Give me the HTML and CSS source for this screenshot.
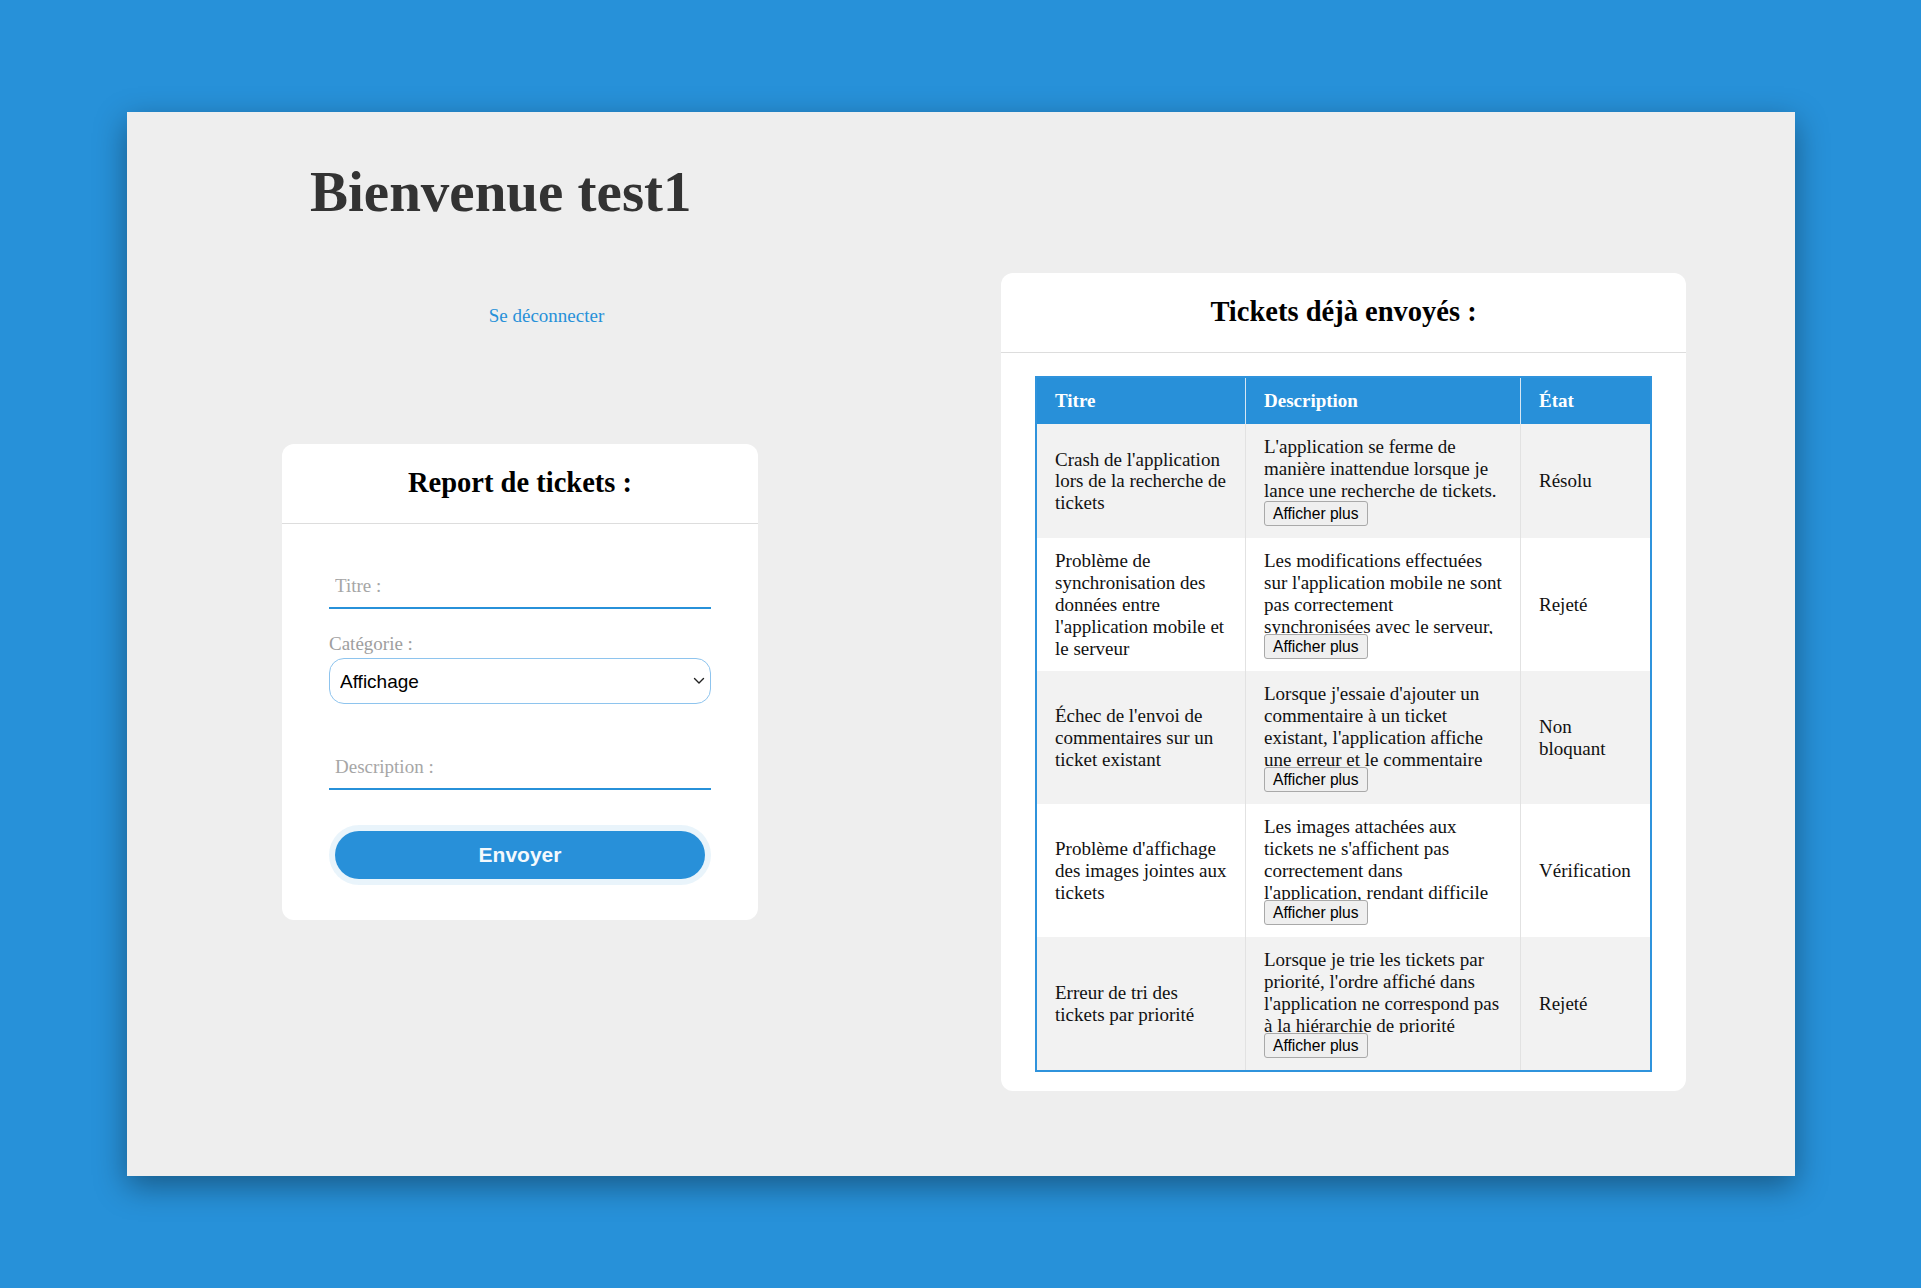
FILE: index.html
```html
<!DOCTYPE html>
<html lang="fr">
<head>
<meta charset="utf-8">
<title>Bienvenue test1</title>
<link rel="stylesheet" href="styles.css">
</head>
<body>
<div class="window">
  <div class="left">
    <h1 class="welcome">Bienvenue test1</h1>
    <div class="logout"><a href="#">Se déconnecter</a></div>
    <div class="card form-card">
      <div class="card-head"><h2>Report de tickets :</h2></div>
      <form class="form-body">
        <input class="line-input" type="text" placeholder="Titre :">
        <label class="field-label">Catégorie :</label>
        <div class="select-wrap">
          <select class="select">
            <option>Affichage</option>
          </select>
          <svg class="chev" width="12" height="8" viewBox="0 0 12 8"><path d="M1.5 1.5 L6 6 L10.5 1.5" fill="none" stroke="#222" stroke-width="1.4" stroke-linecap="round" stroke-linejoin="round"/></svg>
        </div>
        <input class="line-input desc-input" type="text" placeholder="Description :">
        <button class="send" type="button">Envoyer</button>
      </form>
    </div>
  </div>
  <div class="right">
    <div class="card list-card">
      <div class="card-head"><h2>Tickets déjà envoyés :</h2></div>
      <div class="list-body">
        <table class="tickets">
          <colgroup><col class="c1"><col class="c2"><col class="c3"></colgroup>
          <thead>
            <tr><th>Titre</th><th>Description</th><th>État</th></tr>
          </thead>
          <tbody>
            <tr>
              <td>Crash de l'application lors de la recherche de tickets</td>
              <td><div class="dcell"><div class="desc">L'application se ferme de manière inattendue lorsque je lance une recherche de tickets.</div><button class="more" type="button">Afficher plus</button></div></td>
              <td>Résolu</td>
            </tr>
            <tr>
              <td>Problème de synchronisation des données entre l'application mobile et le serveur</td>
              <td><div class="dcell"><div class="desc">Les modifications effectuées sur l'application mobile ne sont pas correctement synchronisées avec le serveur, entraînant une perte de données.</div><button class="more" type="button">Afficher plus</button></div></td>
              <td>Rejeté</td>
            </tr>
            <tr>
              <td>Échec de l'envoi de commentaires sur un ticket existant</td>
              <td><div class="dcell"><div class="desc">Lorsque j'essaie d'ajouter un commentaire à un ticket existant, l'application affiche une erreur et le commentaire n'est pas enregistré.</div><button class="more" type="button">Afficher plus</button></div></td>
              <td>Non bloquant</td>
            </tr>
            <tr>
              <td>Problème d'affichage des images jointes aux tickets</td>
              <td><div class="dcell"><div class="desc">Les images attachées aux tickets ne s'affichent pas correctement dans l'application, rendant difficile la compréhension du problème.</div><button class="more" type="button">Afficher plus</button></div></td>
              <td>Vérification</td>
            </tr>
            <tr>
              <td>Erreur de tri des tickets par priorité</td>
              <td><div class="dcell"><div class="desc">Lorsque je trie les tickets par priorité, l'ordre affiché dans l'application ne correspond pas à la hiérarchie de priorité définie.</div><button class="more" type="button">Afficher plus</button></div></td>
              <td>Rejeté</td>
            </tr>
          </tbody>
        </table>
      </div>
    </div>
  </div>
</div>
</body>
</html>
```
FILE: styles.css
```css
html, body {
  margin: 0;
  padding: 0;
}
body {
  background: #2791d9;
  font-family: "Liberation Serif", "Times New Roman", serif;
  min-height: 1288px;
}
.window {
  margin: 112px 0 0 127px;
  width: 1668px;
  height: 1064px;
  background: #eeeeee;
  box-shadow: 0 10px 30px rgba(0, 0, 0, 0.38);
  display: flex;
  box-sizing: border-box;
  padding-top: 48px;
}
.left {
  width: 834px;
  flex: none;
}
.welcome {
  margin: 0;
  padding-left: 183px;
  font-size: 57px;
  font-weight: bold;
  color: #333;
  line-height: 64px;
}
.logout {
  margin-top: 81px;
  text-align: center;
  padding-left: 5px;
  font-size: 19px;
  line-height: 22px;
}
.logout a {
  color: #2791d9;
  text-decoration: none;
}
.card {
  background: #fff;
  border-radius: 12px;
}
.form-card {
  margin: 117px 0 0 155px;
  width: 476px;
}
.card-head {
  border-bottom: 1px solid #dddddd;
  height: 80px;
  box-sizing: border-box;
  padding-top: 23px;
  text-align: center;
}
.card-head h2 {
  margin: 0;
  font-size: 28.5px;
  font-weight: bold;
  color: #000;
  line-height: 32px;
}
.form-body {
  padding: 41px 47px 41px;
  display: flex;
  flex-direction: column;
}
.line-input {
  display: block;
  width: 100%;
  height: 44px;
  box-sizing: border-box;
  border: none;
  border-bottom: 2px solid #2791d9;
  background: transparent;
  padding: 0 6px;
  font-family: "Liberation Serif", serif;
  font-size: 19px;
  color: #222;
  outline: none;
}
.line-input::placeholder {
  color: #a6a6a6;
}
.field-label {
  margin-top: 24px;
  font-size: 19px;
  line-height: 22px;
  color: #9e9e9e;
}
.select-wrap {
  position: relative;
  margin-top: 3px;
}
.select {
  display: block;
  width: 100%;
  height: 46px;
  box-sizing: border-box;
  border: 1px solid #8ec4ee;
  border-radius: 15px;
  background: #fff;
  padding: 0 10px;
  font-family: "Liberation Sans", Arial, sans-serif;
  font-size: 19px;
  color: #000;
  appearance: none;
  -webkit-appearance: none;
  outline: none;
}
.chev {
  position: absolute;
  right: 6px;
  top: 19px;
}
.desc-input {
  margin-top: 42px;
}
.send {
  margin: 41px 6px 0;
  height: 48px;
  border: none;
  border-radius: 24px;
  background: #2890d9;
  color: #f4f9fd;
  font-family: "Liberation Sans", Arial, sans-serif;
  font-size: 21px;
  font-weight: bold;
  box-shadow: 0 0 0 6px rgba(39, 145, 217, 0.1);
}
.right {
  flex: none;
}
.list-card {
  margin: 113px 0 0 40px;
  width: 685px;
}
.list-body {
  padding: 23px 34px 19px;
}
.tickets {
  width: 617px;
  table-layout: fixed;
  border-collapse: separate;
  border-spacing: 0;
  border: 2px solid #2f93dc;
  font-size: 19px;
  color: #111;
}
.c1 { width: 209px; }
.c2 { width: 275px; }
.c3 { width: 129px; }
.tickets th {
  height: 46px;
  box-sizing: border-box;
  background: #2890d9;
  color: #fff;
  text-align: left;
  font-weight: bold;
  padding: 0 14px 0 18px;
  border-right: 1px solid #d6e6f3;
  vertical-align: middle;
}
.tickets td {
  padding: 12px 12px 12px 18px;
  border-right: 1px solid #e2e2e2;
  vertical-align: middle;
  line-height: 21.8px;
}
.tickets td:nth-child(1) {
  padding-right: 16px;
}
.tickets td:nth-child(2) {
  padding-right: 17px;
}
.tickets th:last-child,
.tickets td:last-child {
  border-right: none;
}
.tickets tbody tr:nth-child(odd) td {
  background: #f2f2f2;
}
.tickets tbody tr:nth-child(even) td {
  background: #fff;
}
.dcell {
  display: flex;
  flex-direction: column;
  align-items: flex-start;
}
.desc {
  max-height: 84px;
  overflow: hidden;
}
.more {
  height: 25px;
  box-sizing: border-box;
  padding: 0 8px;
  border: 1px solid #a9a9a9;
  border-radius: 3px;
  background: #efefef;
  font-family: "Liberation Sans", Arial, sans-serif;
  font-size: 15.6px;
  color: #000;
}
```
